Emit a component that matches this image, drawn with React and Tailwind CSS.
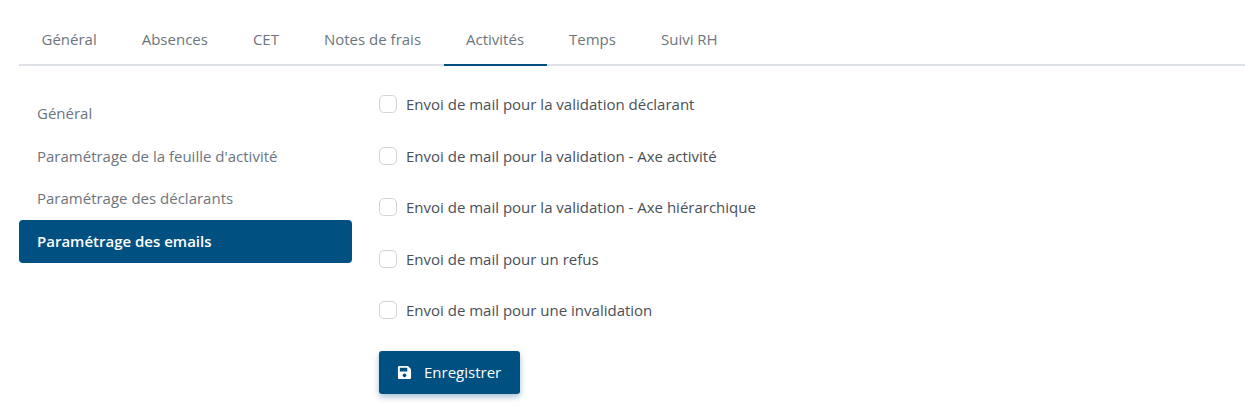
const tabs = ["Général", "Absences", "CET", "Notes de frais", "Activités", "Temps", "Suivi RH"];
const side = ["Général", "Paramétrage de la feuille d'activité", "Paramétrage des déclarants", "Paramétrage des emails"];
const checks = [
  "Envoi de mail pour la validation déclarant",
  "Envoi de mail pour la validation - Axe activité",
  "Envoi de mail pour la validation - Axe hiérarchique",
  "Envoi de mail pour un refus",
  "Envoi de mail pour une invalidation",
];

export default function App() {
  return (
    <div className="w-[1245px] h-[413px] bg-white overflow-hidden pl-[19px] pt-[14px] font-['Open_Sans','Lato',sans-serif] text-[15px] font-medium">
      <nav className="flex h-[52px] border-b-2 border-[#dee2e6]">
        {tabs.map((t, i) => (
          <div
            key={t}
            className={`h-[52px] px-[22.5px] pt-[13px] leading-[24px] text-[#6c757d] ${i === 4 ? "border-b-2 border-[#005082]" : ""}`}
          >
            {t}
          </div>
        ))}
      </nav>
      <div className="flex mt-[26px]">
        <div className="w-[333px] flex flex-col">
          {side.map((s, i) => (
            <div
              key={s}
              className={`h-[42.67px] px-[18px] flex items-center rounded-[4px] ${i === 3 ? "bg-[#005082] text-white font-semibold" : "text-[#6c757d]"}`}
            >
              {s}
            </div>
          ))}
        </div>
        <div className="ml-[27px] -mt-[2px] flex flex-col">
          {checks.map((c) => (
            <label key={c} className="h-[51.5px] flex items-start pt-[3.4px] text-[#495057]">
              <span className="w-[18px] h-[18px] mt-[2px] rounded-[5px] border border-[#ced4da] bg-white shrink-0" />
              <span className="ml-[9px] leading-[22px]">{c}</span>
            </label>
          ))}
          <button className="mt-[3px] w-[141px] h-[43px] flex items-center bg-[#005082] text-white rounded-[3px] pl-[18px] shadow-[0_3px_6px_rgba(0,80,130,0.35)]">
            <svg width="15" height="15" viewBox="0 0 448 512" fill="currentColor" className="shrink-0">
              <path d="M433.941 129.941l-83.882-83.882A48 48 0 0 0 316.118 32H48C21.49 32 0 53.49 0 80v352c0 26.51 21.49 48 48 48h352c26.51 0 48-21.49 48-48V163.882a48 48 0 0 0-14.059-33.941zM224 416c-35.346 0-64-28.654-64-64 0-35.346 28.654-64 64-64s64 28.654 64 64c0 35.346-28.654 64-64 64zm96-304.52V212c0 6.627-5.373 12-12 12H76c-6.627 0-12-5.373-12-12V108c0-6.627 5.373-12 12-12h228.52c3.183 0 6.235 1.264 8.485 3.515l3.48 3.48A11.996 11.996 0 0 1 320 111.48z" />
            </svg>
            <span className="ml-[12px]">Enregistrer</span>
          </button>
        </div>
      </div>
    </div>
  );
}
